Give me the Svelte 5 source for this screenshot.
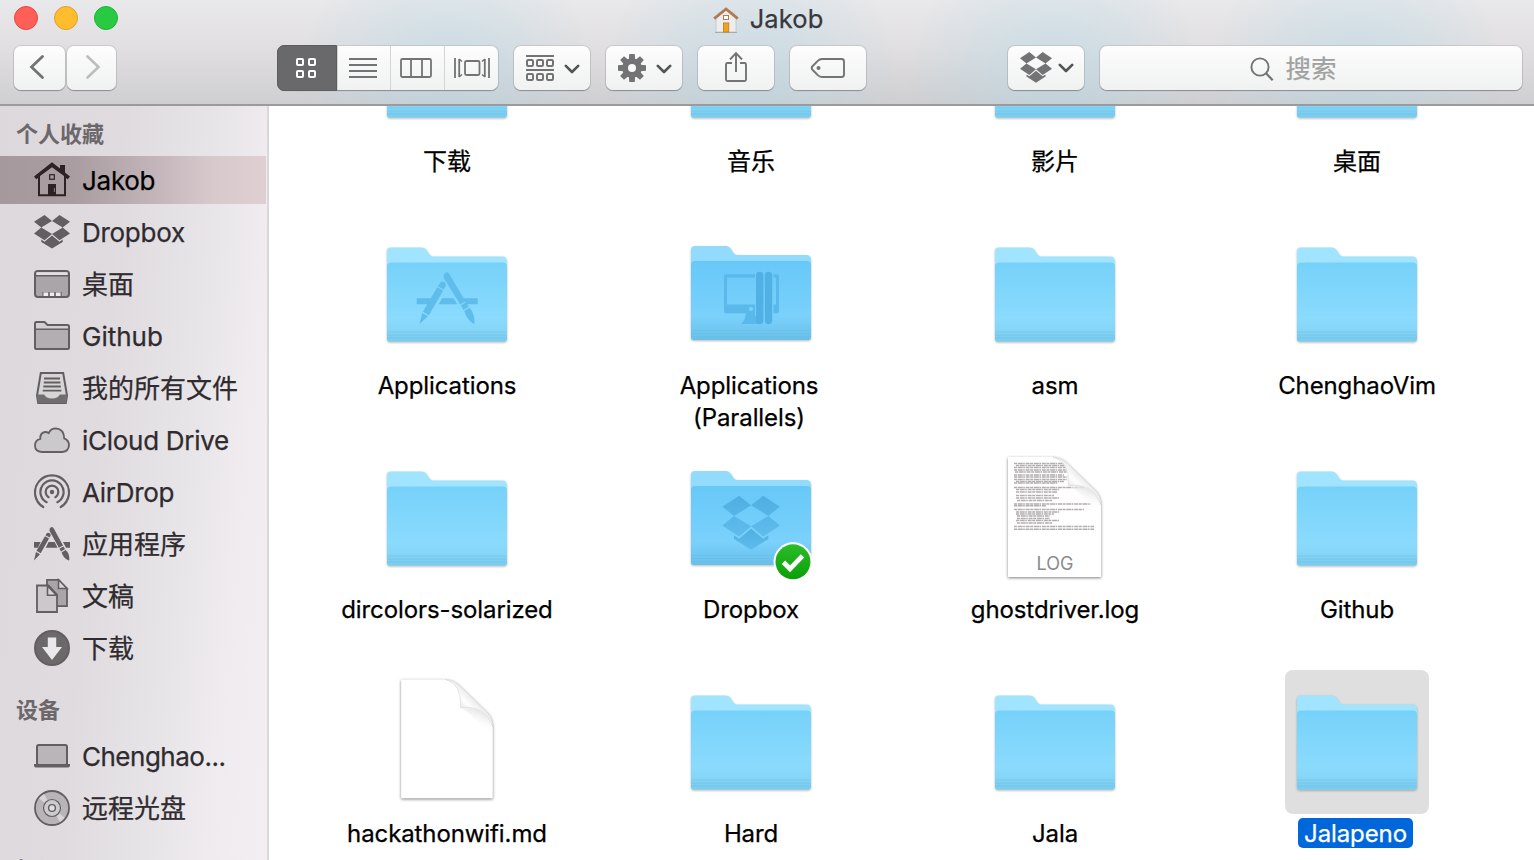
<script>
  const favorites = [
    { name: 'Jakob', icon: 'home', selected: true, latin: true },
    { name: 'Dropbox', icon: 'dropbox', latin: true },
    { name: '桌面', icon: 'desktop' },
    { name: 'Github', icon: 'folder' },
    { name: '我的所有文件', icon: 'allfiles' },
    { name: 'iCloud Drive', icon: 'cloud', latin: true },
    { name: 'AirDrop', icon: 'airdrop', latin: true },
    { name: '应用程序', icon: 'apps' },
    { name: '文稿', icon: 'docs' },
    { name: '下载', icon: 'download' }
  ];
  const devices = [
    { name: 'Chenghao...', icon: 'laptop', tight: true },
    { name: '远程光盘', icon: 'disc' }
  ];
  const files = [
    { name: '下载' }, { name: '音乐' }, { name: '影片' }, { name: '桌面' },
    { name: 'Applications', kind: 'apps' },
    { name: 'Applications (Parallels)', kind: 'parallels' },
    { name: 'asm' }, { name: 'ChenghaoVim' },
    { name: 'dircolors-solarized' },
    { name: 'Dropbox', kind: 'dropbox' },
    { name: 'ghostdriver.log', kind: 'log' },
    { name: 'Github' },
    { name: 'hackathonwifi.md', kind: 'md' },
    { name: 'Hard' }, { name: 'Jala' },
    { name: 'Jalapeno', selected: true }
  ];
  // Line lengths of the miniature log preview: [y, start, end]
  const logLines = [
    [17.5, 0, 53], [19.5, 2, 53], [21.5, 0, 52], [24, 0, 53], [26, 1, 53], [29, 0, 50], [31, 0, 53],
    [33.5, 0, 53], [35.5, 2, 50], [37, 0, 44], [41.5, 0, 70], [43.5, 2, 46], [46, 2, 43], [49.5, 2, 40],
    [52, 2, 45], [54.5, 3, 38], [58, 0, 77], [59.8, 0, 32], [63.5, 0, 70], [66, 2, 46], [68, 2, 40],
    [70, 3, 36], [72.5, 3, 36], [74.5, 2, 45], [77, 3, 38], [80.5, 0, 80], [83.2, 0, 80]
  ];
</script>

{#snippet dropboxShape()}
  <path d="M10.5 0 18 6 7.3 12.6 0 6.8ZM25.5 0 36 6.8 28.7 12.6 18 6ZM7.3 12.6 18 19 10.5 25.3 0 18.5ZM28.7 12.6 36 18.5 25.5 25.3 18 19Z" />
  <path d="M18 20.5 25.5 26.7 28.7 24.6V27L18 33.6 7.3 27V24.6L10.5 26.7Z" />
{/snippet}

{#snippet appsShape()}
  <path d="M0 15.2H6.6L3.9 21H0ZM14.6 15.2H20.6L23.6 21H11.7ZM29 15.2H36V21H32Z" />
  <path d="M16.1 1.4Q17.8-.9 19.5 1.2L29 18.6 24.9 21 15.6 4.3Q15.2 2.9 16.1 1.4Z" />
  <path d="M29.5 19.6 31 22.3 27.1 24.8 25.4 21.9ZM27.6 25.6 31.6 23.2Q35.5 26 35.3 33.2 34.6 34 33.7 33.2 29.3 30.9 27.6 25.6Z" />
  <path d="M12.4 7Q13.8 5.2 15.8 6.4 17.4 7.7 16.4 9.3L15.6 10.7 11.5 8.5ZM11 9.5 15 11.8 6.7 26.5 2.5 24ZM2 25.1 6 27.4 0 33.6Z" />
{/snippet}

{#snippet folderAppsShape()}
  <path d="M0 26.500H17L13.500 32.500H0ZM25.500 26.500H37L40.500 32.500H22ZM46.500 26.500H61V32.500H50Z" />
  <path d="M27 3.500Q28.500-.5 31.800 1L48.800 29.500 43.500 32.800 27 6Z" />
  <path d="M44.200 33.600 49.300 30.500 52 35 46.800 38.200ZM47.500 39.200 52.800 36Q58.500 42 57.800 52.500 51 49.500 47.500 39.200Z" />
  <path d="M22.500 12.500Q24.500 8.500 27.500 10.200 30.300 12 28.500 15.200L27 17.800 21 14.500ZM20.500 15.500 26.500 18.800 12.200 43.500 6.200 40ZM5.500 41.200 11.300 44.500 2.800 52.300Z" />
{/snippet}

{#snippet chevron()}
  <svg class="chev" width="16" height="10" viewBox="0 0 16 10"><path d="M1.8 1.8 8 8 14.2 1.8" fill="none" stroke="#545355" stroke-width="2.6" stroke-linecap="round" stroke-linejoin="round" /></svg>
{/snippet}

{#snippet sideIcon(name)}
  <svg class="side-icon" width="36" height="36" viewBox="0 0 36 36" fill="none" stroke="#625e61" stroke-width="2">
    {#if name === 'home'}
      <g stroke="none" fill="#2d2126">
        <path d="M18 .2 26 6.400V3H31V10.600L36 14.400 33.800 17.200 32 16V34.200H4V16L2.200 17.200 0 14.400ZM18 5.200 6 14V32.200H14V22H22V32.200H30V14Z" fill-rule="evenodd" />
        <path d="M14 22H22V34H14Z" />
      </g>
      <rect x="15.700" y="12.700" width="4.600" height="4.600" stroke="#2d2126" stroke-width="1.200" />
      <path d="M20.400 26V30" stroke="#a39599" stroke-width=".8" />
    {:else if name === 'dropbox'}
      <g fill="#625e61" stroke="none" transform="translate(0 1)">{@render dropboxShape()}</g>
    {:else if name === 'desktop'}
      <rect x="1" y="5" width="34" height="26" rx="3" fill="#aaa5a9" />
      <path d="M2.500 6.200H33.500V9H2.500Z" fill="#e2dfe1" stroke="none" />
      <path d="M1 9.800H35" stroke-width="1.600" />
      <path d="M8.200 26H28V30H8.200Z" fill="#7b777a" stroke="none" />
      <path d="M9.500 26.500H14V30H9.500ZM16 26.500H20V30H16ZM22 26.500H26.500V30H22Z" fill="#eeecee" stroke="none" />
    {:else if name === 'folder'}
      <path d="M1 30V5.500Q1 4 2.500 4H10.500L13.500 7H33.500Q35 7 35 8.500V29.500Q35 31 33.500 31H2Q1 31 1 30Z" fill="#d3d0d3" />
      <path d="M2 12H34V30H2Z" fill="#b3aeb1" stroke="none" />
      <path d="M1 11.300H35" stroke-width="1.600" />
    {:else if name === 'allfiles'}
      <path d="M6.800 3H29.200L33 25.500 31.800 33H4.200L3 25.500Z" fill="#d8d5d7" />
      <path d="M2.600 24.500H10.200Q12 28.500 18 28.500 24 28.500 25.800 24.500H33.400L32 33H4Z" fill="#716e70" stroke="none" />
      <path d="M10 8.500H26M9.800 12.500H26.400M9.300 16.500H26.800M8.700 20.700H27.400" stroke-width="1.800" />
    {:else if name === 'cloud'}
      <path d="M8 30Q1 29.500 1 23.500 1 18.200 6.300 16.800 6 10.500 11.200 10 13 9.900 14.600 11.100 16.700 6.300 22 6.300 29.800 7 30.200 16.300 35 18.200 35 23.400 34.600 29.200 28.300 30Z" fill="#ccc9cc" stroke-width="1.800" />
    {:else if name === 'airdrop'}
      <path d="M9.300 33A17 17 0 1 1 26.700 33M12.600 28.200A11.600 11.600 0 1 1 23.400 28.200M14.600 23.200A6.300 6.300 0 1 1 21.400 23.200" stroke-linecap="round" stroke-width="2.200" />
      <circle cx="18" cy="18" r="2.200" fill="#625e61" stroke="none" />
    {:else if name === 'apps'}
      <g fill="#625e61" stroke="none" transform="translate(0 .8)">{@render appsShape()}</g>
    {:else if name === 'docs'}
      <path d="M13 1.800H24.500L33 10.500V28.200H13Z" fill="#aaa5a9" stroke-width="1.800" />
      <path d="M24.500 1.800V10.500H33Z" fill="#d9d6d9" stroke-width="1.600" />
      <path d="M3 7.500H14.500L23 16.500V34H3Z" fill="#ccc8cb" stroke-width="1.800" />
      <path d="M13.500 8V17.300H22.500Z" fill="#d9d6d9" stroke-width="1.600" />
    {:else if name === 'download'}
      <circle cx="18" cy="18" r="17" fill="#6c696b" />
      <path d="M13.800 7.500H22.200V17H28L18 30 8 17H13.800Z" fill="#ebe8eb" stroke="none" />
    {:else if name === 'laptop'}
      <rect x="3" y="7" width="30" height="20" rx="1.800" fill="#bab5b9" />
      <path d="M0 26H36V27.500Q36 29.500 34 29.500H2Q0 29.500 0 27.500Z" fill="#625e61" stroke="none" />
    {:else}
      <circle cx="18" cy="18" r="17" fill="#b9b4b8" stroke-width="1.800" />
      <path d="M18 18 5 8.400A16 16 0 0 1 10 4.100ZM18 18 30.600 27.600A16 16 0 0 1 26 31.900Z" fill="#d8d5d8" stroke="none" />
      <circle cx="18" cy="18" r="8.500" fill="#cecbce" stroke-width="1.200" />
      <circle cx="18" cy="18" r="3.400" fill="#e1dee1" stroke-width="1.400" />
    {/if}
  </svg>
{/snippet}

{#snippet fileIcon(kind)}
  <svg class="file-icon" width="144" height="144" viewBox="0 0 144 144">
    {#if kind === 'log' || kind === 'md'}
      <g transform={kind === 'log' ? 'translate(0 2)' : 'translate(1.500 .500) scale(.985 .99)'}>
        <path class="paper" d="M25 9H70Q78 9 84 15L112 42Q118 48 118 56V129H25Z" fill="#fff" />
        {#if kind === 'log'}
          {#each logLines as [y, from, to]}
            <path d="M{31 + from} {y - 2}H{31 + to}" stroke="#b3adaf" stroke-width="1.400" stroke-dasharray="3 .7 5 .5 1.600 .8 4 .6" />
          {/each}
        {/if}
        <path d="M85.500 37.500Q112 36 118 58V80Q108 50 85.500 37.500Z" fill="url(#fold)" />
        <path d="M70 9Q78 9 84 15L112 42Q118 48 118 57 110 34.500 85.500 37.500 86.500 13 70 9Z" fill="url(#curl)" stroke="#d2d2d2" stroke-width=".6" />
        {#if kind === 'log'}
          <text x="72" y="121.500" text-anchor="middle" class="ext">LOG</text>
        {/if}
      </g>
    {:else}
      <g class="folder" transform={kind === 'parallels' ? 'translate(0 -2)' : kind === 'dropbox' ? 'translate(0 -1)' : 'translate(0 -.5)'}>
        <path d="M12 30Q12 26 16 26H47Q50 26 52 29L54.500 33Q56 35 58 35H127Q132 35 132 40V117Q132 120 129 120H15Q12 120 12 117Z" fill={kind === 'parallels' || kind === 'dropbox' ? '#93dbfd' : '#a1e4ff'} />
        <path d="M12 45Q12 41 16 41H128Q132 41 132 45V117Q132 120 129 120H15Q12 120 12 117Z" fill={kind === 'parallels' || kind === 'dropbox' ? 'url(#front2)' : 'url(#front)'} />
        <path d="M12.500 110.500H131.500M12.500 113.500H131.500M12.500 116.500H131.500" stroke="#64b9de" stroke-opacity=".32" stroke-width="1" />
      </g>
      {#if kind === 'apps'}
        <g fill="#5fbceb" transform="translate(41.700 49.700)">{@render folderAppsShape()}</g>
      {:else if kind === 'dropbox'}
        <g fill="url(#emboss)" transform="translate(43.300 49.700) scale(1.603 1.608)">{@render dropboxShape()}</g>
        <circle cx="114" cy="115.800" r="19.500" fill="#fff" />
        <circle cx="114" cy="115.800" r="17.500" fill="url(#check)" />
        <path d="M104.500 116.300 111 122.800 123.500 109.800" fill="none" stroke="#fff" stroke-width="4.800" />
      {:else if kind === 'parallels'}
        <path fill="#5ab8ea" fill-rule="evenodd" d="M47 52.300H76V94H79V102H62Q66 99 67 91.300H47Q45 91.300 45 89V54.500Q45 52.300 47 52.300ZM48 55.500V82.500H76V55.500ZM94.500 52.300H98Q100 52.300 100 54.500V89Q100 91.300 98 91.300H94.500V82.500H97V55.500H94.500Z" />
        <circle cx="72" cy="87" r="2" fill="#7dd1fb" />
        <rect x="77" y="49.700" width="7.400" height="52.600" rx="3.700" fill="#51b0e4" />
        <rect x="85.800" y="49.700" width="7.400" height="52.600" rx="3.700" fill="#51b0e4" />
      {/if}
    {/if}
  </svg>
{/snippet}

<svg class="defs" width="0" height="0" aria-hidden="true">
  <defs>
    <linearGradient id="front" x1="0" y1="0" x2="0" y2="1">
      <stop offset="0" stop-color="#76d1f9" /><stop offset=".7" stop-color="#8adbfe" /><stop offset=".84" stop-color="#86d6f8" /><stop offset="1" stop-color="#78cbee" />
    </linearGradient>
    <linearGradient id="front2" x1="0" y1="0" x2="0" y2="1">
      <stop offset="0" stop-color="#67c8f8" /><stop offset=".7" stop-color="#7ad1fc" /><stop offset="1" stop-color="#68bfe8" />
    </linearGradient>
    <linearGradient id="emboss" x1="0" y1="0" x2="0" y2="1">
      <stop offset="0" stop-color="#50aee2" /><stop offset="1" stop-color="#60bcec" />
    </linearGradient>
    <linearGradient id="curl" gradientUnits="userSpaceOnUse" x1="85" y1="38" x2="98" y2="25">
      <stop offset="0" stop-color="#e9e9e9" /><stop offset=".45" stop-color="#fefefe" /><stop offset="1" stop-color="#e6e6e6" />
    </linearGradient>
    <linearGradient id="fold" gradientUnits="userSpaceOnUse" x1="110" y1="40" x2="102" y2="58">
      <stop offset="0" stop-color="#dedede" /><stop offset="1" stop-color="#fff" stop-opacity="0" />
    </linearGradient>
    <linearGradient id="check" x1="0" y1="0" x2="0" y2="1">
      <stop offset="0" stop-color="#2bbd28" /><stop offset="1" stop-color="#0a9f0a" />
    </linearGradient>
  </defs>
</svg>

<div class="window">
  <header>
    <div class="titlebar">
      <div class="lights"><i class="red"></i><i class="yellow"></i><i class="green"></i></div>
      <div class="title">
        <svg width="26" height="26" viewBox="0 0 26 26">
          <path d="M19 3.500H22.500V11H19Z" fill="#d8d8d8" />
          <path d="M3 11 13 3 23 11V25H3Z" fill="#ededee" stroke="#c2c1c3" stroke-width=".8" />
          <path d="M2 25.500H24" stroke="#a9a9aa" />
          <path d="M1.200 11.700 13 2 24.800 11.700" fill="none" stroke="#ad7b54" stroke-width="2.800" />
          <rect x="10.500" y="8.500" width="5" height="4" fill="#fff" stroke="#b97a4b" />
          <rect x="10.500" y="16" width="5.200" height="9" fill="#f2a21a" stroke="#c3862d" />
        </svg>
        <span>Jakob</span>
      </div>
    </div>
    <div class="toolbar">
      <div class="btn back"><svg width="16" height="26" viewBox="0 0 16 26"><path d="M13.500 2.500 2.500 13 13.500 23.500" fill="none" stroke="#737274" stroke-width="2.800" stroke-linecap="round" /></svg></div>
      <div class="btn forward"><svg width="16" height="26" viewBox="0 0 16 26"><path d="M2.500 2.500 13.500 13 2.500 23.500" fill="none" stroke="#bebdbe" stroke-width="2.600" stroke-linecap="round" /></svg></div>
      <div class="views">
        <div class="seg active">
          <svg width="22" height="22" viewBox="0 0 22 22" fill="none" stroke="#fff" stroke-width="2"><rect x="2" y="2" width="6" height="6" rx="1" /><rect x="14" y="2" width="6" height="6" rx="1" /><rect x="2" y="14" width="6" height="6" rx="1" /><rect x="14" y="14" width="6" height="6" rx="1" /></svg>
        </div>
        <div class="seg"><svg width="28" height="22" viewBox="0 0 28 22"><path d="M0 2H28M0 8H28M0 14H28M0 20H28" stroke="#737274" stroke-width="2" /></svg></div>
        <div class="seg"><svg width="32" height="22" viewBox="0 0 32 22" fill="none" stroke="#737274" stroke-width="1.800"><rect x="1" y="2" width="30" height="18" rx="1.500" /><path d="M11 2V20M22 2V20" /></svg></div>
        <div class="seg"><svg width="36" height="22" viewBox="0 0 36 22" fill="none" stroke="#737274" stroke-width="1.800"><rect x="11" y="4" width="14.500" height="14" rx="1.500" /><path d="M1 1V21M35 1V21M5.200 2V20M30.800 2V20" /><path d="M5 2 8 4.500M5 20 8 17.500M31 2 28 4.500M31 20 28 17.500" stroke-width="1.600" /></svg></div>
      </div>
      <div class="btn pair">
        <svg width="28" height="28" viewBox="0 0 28 28" fill="none" stroke="#737274" stroke-width="2"><path d="M0 2H28M0 16H28" />
          {#each [0, 10, 20] as x}{#each [6, 20] as y}<rect x={x + 1} {y} width="6" height="6" rx="1.200" />{/each}{/each}
        </svg>
        {@render chevron()}
      </div>
      <div class="btn pair gear">
        <svg width="28" height="28" viewBox="-14 -14 28 28">
          <g fill="#737274">
            {#each [0, 45, 90, 135] as a}<path d="M-2.700-14H2.700L3.200-8V8L2.700 14H-2.700L-3.200 8V-8Z" transform="rotate({a})" />{/each}
            <circle r="9.800" />
          </g>
          <circle r="4" fill="#f8f9f9" />
        </svg>
        {@render chevron()}
      </div>
      <div class="btn share"><svg width="24" height="32" viewBox="0 0 24 32" fill="none" stroke="#737274" stroke-width="1.900"><path d="M8 12H3.500Q2 12 2 13.500V28.500Q2 30 3.500 30H20.500Q22 30 22 28.500V13.500Q22 12 20.500 12H16M12 21V3M6 8.500 12 2.200 18 8.500" /></svg></div>
      <div class="btn tag"><svg width="36" height="22" viewBox="0 0 36 22" fill="none" stroke="#737274" stroke-width="1.900"><path d="M12 2H31.500Q34 2 34 4.500V17.500Q34 20 31.500 20H12Q9.500 20 7.800 18.200L2.700 13Q.7 11 2.700 9L7.800 3.800Q9.500 2 12 2Z" /><circle cx="8.500" cy="11" r="2" fill="#737274" stroke="none" /></svg></div>
      <div class="btn box">
        <svg width="32" height="31" viewBox="0 0 36 34" fill="#737274" preserveAspectRatio="none">{@render dropboxShape()}</svg>
        {@render chevron()}
      </div>
      <div class="btn search">
        <svg width="24" height="24" viewBox="0 0 24 24" fill="none" stroke="#737274" stroke-width="1.900"><circle cx="10" cy="10" r="8.600" /><path d="M16 16.200 22.700 23.200" stroke-width="2.200" /></svg>
        <span>搜索</span>
      </div>
    </div>
  </header>

  <div class="body">
    <aside>
      <h2>个人收藏</h2>
      <ul>
        {#each favorites as item}
          <li class:selected={item.selected} class:latin={item.latin}>{@render sideIcon(item.icon)}<span>{item.name}</span></li>
        {/each}
      </ul>
      <h2 class="next">设备</h2>
      <ul>
        {#each devices as item}
          <li class:tight={item.tight}>{@render sideIcon(item.icon)}<span>{item.name}</span></li>
        {/each}
      </ul>
      <h2 class="next">标记</h2>
    </aside>
    <main>
      <div class="grid">
        {#each files as file}
          <div class="file" class:selected={file.selected}>
            <div class="thumb">{@render fileIcon(file.kind)}</div>
            <div class="label" class:wrapped={file.kind === 'parallels'}><span>{file.name}</span></div>
          </div>
        {/each}
      </div>
    </main>
  </div>
</div>

<style>
  :global(body) { margin: 0; overflow: hidden; }
  .defs { position: absolute; }
  .window {
    width: 1534px; height: 860px; display: flex; flex-direction: column; overflow: hidden;
    background: #fff; font-family: Inter, "Noto Sans CJK SC", sans-serif; color: #000;
    -webkit-text-stroke: .25px currentColor;
  }
  svg { display: block; flex: none; }
  header {
    height: 106px; flex: none; box-sizing: border-box; border-bottom: 2px solid #9b9a9c;
    background:
      radial-gradient(ellipse 150px 130px at 447px 75px, rgba(175, 217, 232, .45), rgba(175, 217, 232, .3) 40%, transparent),
      radial-gradient(ellipse 150px 130px at 751px 75px, rgba(175, 217, 232, .45), rgba(175, 217, 232, .3) 40%, transparent),
      radial-gradient(ellipse 150px 130px at 1055px 75px, rgba(175, 217, 232, .45), rgba(175, 217, 232, .3) 40%, transparent),
      radial-gradient(ellipse 150px 130px at 1357px 75px, rgba(175, 217, 232, .45), rgba(175, 217, 232, .3) 40%, transparent),
      linear-gradient(#e9e8ea, #e1dfe1 45%, #cfced0);
  }
  .titlebar { height: 46px; display: grid; grid-template-columns: 200px 1fr 200px; }
  .lights { display: flex; gap: 16px; padding: 6px 0 0 14px; }
  .lights i { width: 24px; height: 24px; border-radius: 50%; box-sizing: border-box; }
  .red { background: #ff5f57; border: 1px solid #e2493f; }
  .yellow { background: #ffbd2e; border: 1px solid #dea032; }
  .green { background: #28ca42; border: 1px solid #1fb236; }
  .title { display: flex; justify-content: center; gap: 11px; height: 36px; align-items: center; font-size: 25.500px; letter-spacing: .1px; color: #38383c; padding-left: 2px; }
  .title svg { margin-top: 3px; }
  .toolbar { display: flex; padding-left: 14px; height: 44px; }
  .btn, .views {
    height: 44px; border-radius: 7px; background: linear-gradient(#fdfdfd, #f0f1f1); display: flex;
    align-items: center; justify-content: center; flex: none;
    box-shadow: 0 0 0 1px rgba(120, 115, 120, .2), 0 1px 1px rgba(70, 70, 75, .45);
  }
  .back { width: 51px; } .back svg { margin-right: 5px; margin-top: -2px; }
  .forward { width: 49px; margin-left: 2px; } .forward svg { margin-left: 3px; margin-top: -2px; }
  .views { width: 220px; margin-left: 162px; justify-content: flex-start; }
  .seg { width: 53px; height: 44px; border-left: 1px solid #d4d4d6; display: flex; align-items: center; justify-content: center; box-sizing: border-box; }
  .seg:nth-child(2) svg, .seg:nth-child(3) svg { margin-left: -3px; }
  .seg:nth-child(3), .seg:nth-child(4) { width: 54px; }
  .seg.active { width: 60px; height: 46px; margin-left: -1px; background: #69686b; border: 1px solid #5d5c5f; border-radius: 7px 0 0 7px; }
  .seg.active svg { margin-left: -2px; }
  .pair { width: 76px; margin-left: 16px; gap: 10px; }
  .pair .chev { margin-right: -2px; margin-top: 1px; }
  .share, .tag { width: 76px; margin-left: 16px; }
  .share svg { margin-top: -2px; }
  .box { width: 76px; margin-left: 142px; gap: 6px; }
  .box svg:first-child { width: 32px; margin-top: -2px; margin-left: 1px; }
  .search { width: 422px; margin-left: 16px; gap: 11px; color: #a1a1a1; font-size: 25.500px; }
  .search svg { margin-left: -35px; margin-top: 2px; }
  .search span { line-height: 42px; padding-top: 2px; }

  .body { flex: 1; display: flex; min-height: 0; }
  aside {
    width: 267px; flex: none; border-right: 2px solid #dad7da; overflow: hidden;
    background: linear-gradient(95deg, #dcd8dc 0%, #dfdbdf 38%, #e8e5e8 66%, #efebee 82%, #f3eef1 100%);
  }
  h2 { margin: 0; padding: 13px 0 0 16px; height: 37px; line-height: 30px; font-size: 22px; font-weight: 700; color: #6b676a; -webkit-text-stroke: 0; }
  h2.next { padding-top: 23px; height: 37px; }
  ul { margin: 0; padding: 0; list-style: none; display: flex; flex-direction: column; gap: 4px; }
  li { height: 48px; display: flex; align-items: center; gap: 12px; padding-left: 34px; font-size: 26px; color: #2f2b2f; white-space: nowrap; }
  li span { line-height: 48px; padding-top: 1px; }
  li.latin { letter-spacing: -.28px; }
  li.tight { letter-spacing: -.5px; }
  li.selected { width: 266px; box-sizing: border-box; color: #000; background: linear-gradient(90deg, #a5999d, #a99da1 28%, #c6b8bc 62%, #d8c9cd 80%, #dfcfd3); }

  main { flex: 1; overflow: hidden; }
  .grid { display: grid; grid-template-columns: 304px 304px 304px 300px; grid-auto-rows: 224px; padding-left: 26px; margin-top: -108px; }
  .file { display: flex; flex-direction: column; align-items: center; }
  .thumb { width: 144px; height: 144px; border-radius: 8px; }
  .label { width: 230px; margin-top: 4px; text-align: center; font-size: 24px; line-height: 32px; letter-spacing: -.1px; }
  .label.wrapped { padding-right: 4px; }
  .label span { padding: 0 7px; display: inline-block; }
  .selected .thumb { background: #dfdfdf; }
  .selected .label { line-height: 30px; margin-left: -3px; }
  .selected .label span { background: #0067db; color: #fff; border-radius: 5px; padding: 0 6.500px; box-sizing: border-box; height: 30px; line-height: 32px; }
  .folder { filter: drop-shadow(0 1px 1px rgba(0, 0, 0, .28)); }
  .paper { filter: drop-shadow(0 1px 1.500px rgba(0, 0, 0, .5)); }
  .ext { font: 18px Inter, sans-serif; fill: #8b8b8b; }
</style>
